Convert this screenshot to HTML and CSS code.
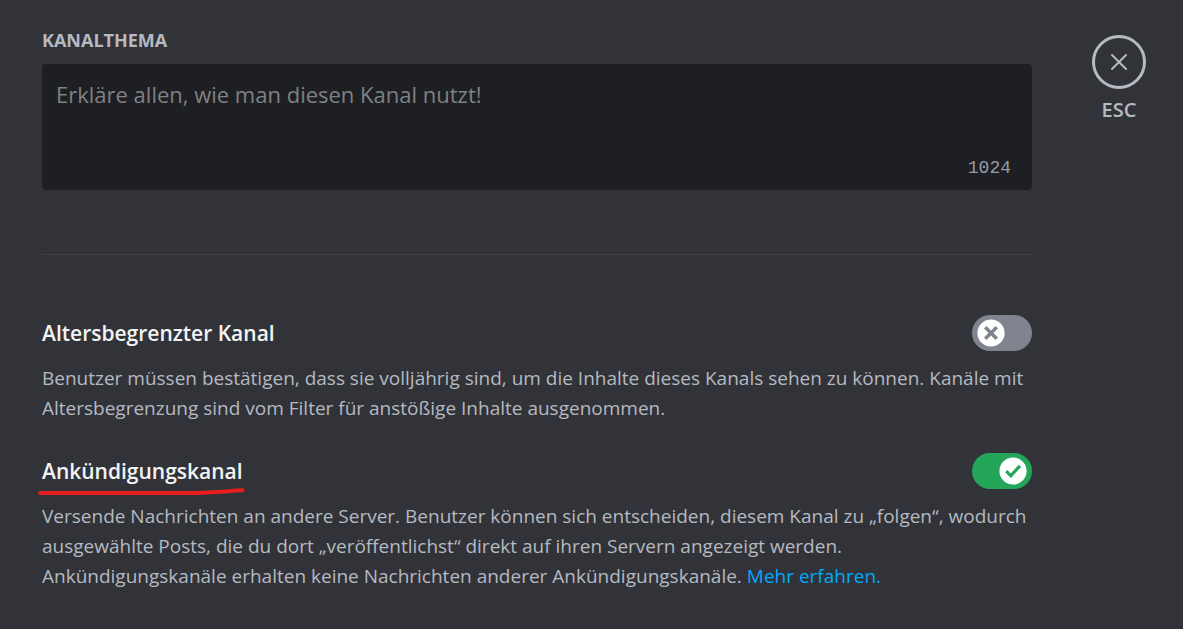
FILE: index.html
```html
<!DOCTYPE html>
<html lang="de">
<head>
<meta charset="utf-8">
<meta name="viewport" content="width=device-width, initial-scale=1">
<title>Kanalübersicht</title>
<link rel="stylesheet" href="styles.css">
</head>
<body>
<div class="page">
  <main class="settings">
    <label class="field-label" for="topic">Kanalthema</label>
    <div class="topic">
      <textarea class="topic-input" id="topic" maxlength="1024" placeholder="Erkläre allen, wie man diesen Kanal nutzt!"></textarea>
      <div class="topic-count">1024</div>
    </div>
    <hr class="divider">
    <section class="setting">
      <div class="setting-head">
        <label class="setting-title" for="age">Altersbegrenzter Kanal</label>
        <span class="switch">
          <input class="switch-input" type="checkbox" id="age">
          <svg class="switch-knob" viewBox="0 0 28 28" aria-hidden="true"><circle cx="14" cy="14" r="13.6" fill="#fff"/><path d="M8.2 8.2l11.600 11.600M19.800 8.200L8.200 19.800" stroke="#80848e" stroke-width="3.4" fill="none"/></svg>
        </span>
      </div>
      <p class="setting-text">Benutzer müssen bestätigen, dass sie volljährig sind, um die Inhalte dieses Kanals sehen zu können. Kanäle mit Altersbegrenzung sind vom Filter für anstößige Inhalte ausgenommen.</p>
    </section>
    <section class="setting">
      <div class="setting-head">
        <label class="setting-title" for="news">Ankündigungskanal
          <svg class="marker" viewBox="0 0 208 8" preserveAspectRatio="none" aria-hidden="true"><path d="M2 6H158C168 6 170 5 180 5S194 3.300 206 3.300" fill="none" stroke="#e61e1e" stroke-width="4" stroke-linecap="round"/></svg>
        </label>
        <span class="switch">
          <input class="switch-input" type="checkbox" id="news" checked>
          <svg class="switch-knob switch-knob-on" viewBox="0 0 28 28" aria-hidden="true"><circle cx="14" cy="14" r="13.600" fill="#fff"/><path d="M7.200 14.200l4.600 4.600L21 8.800" stroke="#23a55a" stroke-width="3.200" fill="none"/></svg>
        </span>
      </div>
      <p class="setting-text">Versende Nachrichten an andere Server. Benutzer können sich entscheiden, diesem Kanal zu „folgen“, wodurch ausgewählte Posts, die du dort „veröffentlichst“ direkt auf ihren Servern angezeigt werden.<br>Ankündigungskanäle erhalten keine Nachrichten anderer Ankündigungskanäle. <a class="link" href="#">Mehr erfahren.</a></p>
    </section>
  </main>
  <div class="close">
    <button class="close-button" type="button" aria-label="Schließen"><svg class="close-icon" viewBox="0 0 18 18" aria-hidden="true"><path d="M2 2l14 14M16 2L2 16" stroke="currentColor" stroke-width="2" stroke-linecap="round"/></svg></button>
    <span class="close-key">ESC</span>
  </div>
</div>
</body>
</html>
```
FILE: styles.css
```css
* {
  box-sizing: border-box;
}

body {
  margin: 0;
  background: #313338;
  color: #b5bac1;
  font-family: "Open Sans", "Noto Sans", sans-serif;
  font-size: 19px;
  line-height: 30px;
}

.page {
  display: flex;
  justify-content: space-between;
  padding: 28px 37px 0 42px;
}

.settings {
  flex: 1;
  max-width: 990px;
}

.field-label {
  display: block;
  font-size: 18px;
  font-weight: 700;
  line-height: 24px;
  text-transform: uppercase;
}

.topic {
  display: flex;
  flex-direction: column;
  margin-top: 12px;
  height: 126px;
  border-radius: 4px;
  background: #1e1f22;
}

.topic-input {
  flex: 1;
  padding: 14px;
  border: 0;
  outline: 0;
  resize: none;
  background: transparent;
  color: #dbdee1;
  font: inherit;
  font-size: 22px;
  line-height: 32px;
}

.topic-input::placeholder {
  color: #7f8185;
  opacity: 1;
}

.topic-count {
  padding: 0 21px 12px;
  color: #949ba4;
  font-family: "Liberation Mono", monospace;
  font-size: 18px;
  line-height: 20px;
  text-align: right;
}

.divider {
  height: 1px;
  margin: 64px 0 60px;
  border: 0;
  background: #404248;
}

.setting {
  margin-bottom: 30px;
}

.setting-head {
  display: flex;
  align-items: center;
  justify-content: space-between;
  height: 36px;
}

.setting-title {
  position: relative;
  color: #f2f3f5;
  font-size: 21px;
  font-weight: 600;
}

.marker {
  position: absolute;
  left: -4px;
  bottom: -9px;
  width: calc(100% + 6px);
  height: 8px;
}

.switch {
  position: relative;
  display: flex;
}

.switch-input {
  appearance: none;
  width: 60px;
  height: 36px;
  margin: 0;
  border-radius: 18px;
  background: #80848e;
  cursor: pointer;
}

.switch-input:checked {
  background: #23a55a;
}

.switch-knob {
  position: absolute;
  top: 4px;
  left: 5px;
  width: 28px;
  height: 28px;
  pointer-events: none;
}

.switch-knob-on {
  left: 27px;
}

.setting-text {
  margin: 12px 0 0;
}

.link {
  color: #00a8fc;
  text-decoration: none;
}

.close {
  display: flex;
  flex-direction: column;
  align-items: center;
  padding-top: 7px;
}

.close-button {
  display: grid;
  place-items: center;
  width: 54px;
  height: 54px;
  padding: 0;
  border: 3px solid #b5bac1;
  border-radius: 50%;
  background: transparent;
  color: #b5bac1;
  cursor: pointer;
}

.close-icon {
  width: 18px;
  height: 18px;
}

.close-key {
  margin-top: 6px;
  font-size: 20px;
  font-weight: 600;
}
```
